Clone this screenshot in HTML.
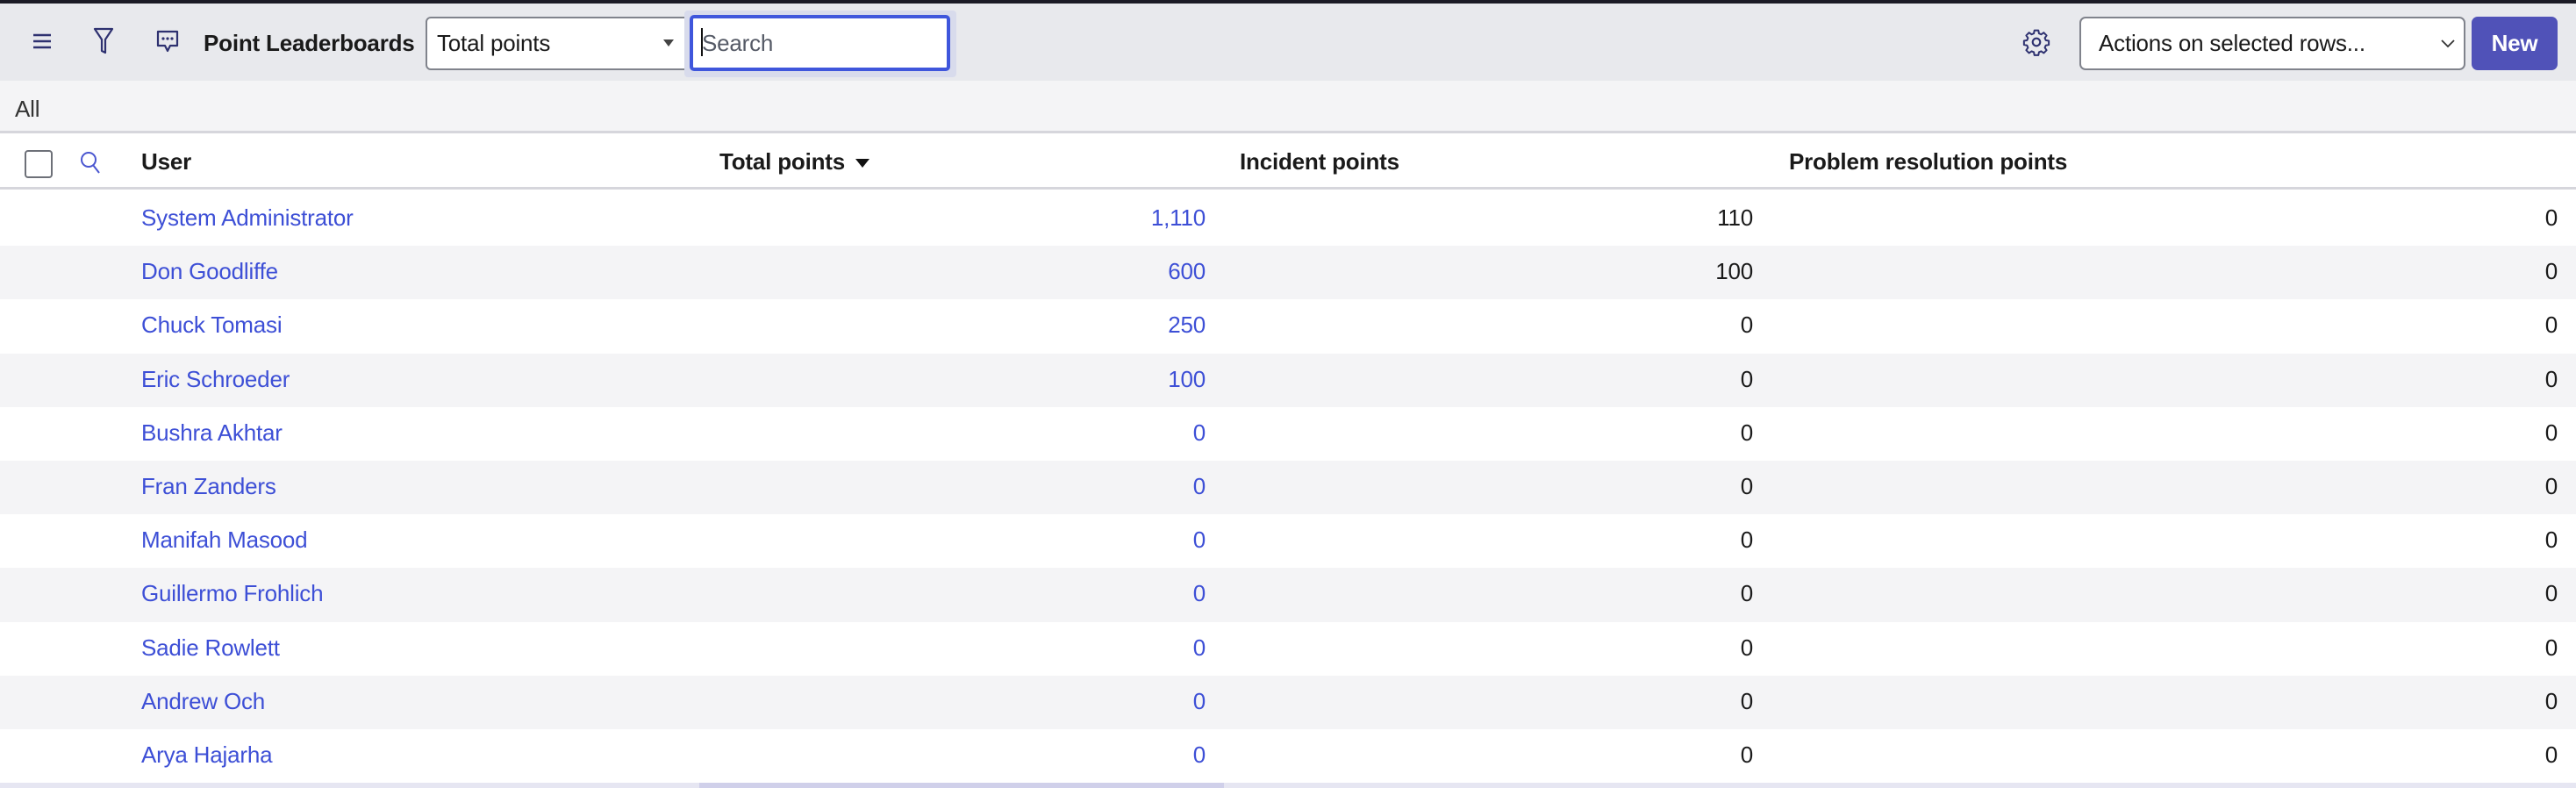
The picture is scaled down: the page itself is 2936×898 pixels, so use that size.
<!DOCTYPE html>
<html><head><style>
*{margin:0;padding:0;box-sizing:border-box}
body{width:2936px;height:898px;overflow:hidden;font-family:"Liberation Sans",sans-serif;background:#fff;position:relative;color:#1a1a1a}
.a{position:absolute}
.top{left:0;top:0;width:2936px;height:4px;background:#1b1b26}
.tb{left:0;top:4px;width:2936px;height:88px;background:#e8e9ed}
.fb{left:0;top:92px;width:2936px;height:60px;background:#f4f4f6;border-bottom:3px solid #d6d6dc}
.hd{left:0;top:152px;width:2936px;height:64px;background:#fff;border-bottom:3px solid #d6d6dc}
.row{left:0;width:2936px;height:61.5px}
.t{font-size:26px;line-height:32px;white-space:nowrap;letter-spacing:-0.2px}
.b{font-weight:bold}
.lk{color:#3d4fd6}
.r{text-align:right}
</style></head><body>
<div class="a top"></div>
<div class="a tb"></div>
<svg class="a" style="left:37px;top:38px" width="22" height="18"><path d="M1 2h20M1 9h20M1 16h20" stroke="#2e3170" stroke-width="2.5"/></svg>
<svg class="a" style="left:106px;top:30px" width="24" height="34"><path d="M2 3h20l-8 12v15l-4 -2v-13z" fill="none" stroke="#2e3170" stroke-width="2.2" stroke-linejoin="round"/></svg>
<svg class="a" style="left:178px;top:34px" width="26" height="28"><path d="M2 2h22v16h-8l-3 6-3-6h-8z" fill="none" stroke="#2e3170" stroke-width="2.2" stroke-linejoin="round"/><circle cx="8" cy="10" r="1.6" fill="#2e3170"/><circle cx="13" cy="10" r="1.6" fill="#2e3170"/><circle cx="18" cy="10" r="1.6" fill="#2e3170"/></svg>
<div class="a t b" style="left:232px;top:33px">Point Leaderboards</div>
<div class="a" style="left:485px;top:19px;width:300px;height:61px;background:#fff;border:2px solid #80838c;border-radius:6px 0 0 6px"></div>
<div class="a t" style="left:498px;top:33px">Total points</div>
<div class="a" style="left:756px;top:45px;width:0;height:0;border-left:6px solid transparent;border-right:6px solid transparent;border-top:8px solid #444"></div>
<div class="a" style="left:780px;top:12px;width:310px;height:76px;background:#d8dbec;border-radius:4px"></div>
<div class="a" style="left:786px;top:17px;width:297px;height:64px;background:#fff;border:4px solid #3f56dc;border-radius:5px"></div>
<div class="a" style="left:799px;top:32px;width:2px;height:32px;background:#111"></div>
<div class="a t" style="left:800px;top:33px;color:#555a66">Search</div>
<svg class="a" style="left:2305px;top:32px" width="32" height="32" viewBox="0 0 24 24"><circle cx="12" cy="12" r="3.2" fill="none" stroke="#2e3170" stroke-width="1.6"/><path d="M10.3 2h3.4l.5 2.6 1.9.8 2.2-1.5 2.4 2.4-1.5 2.2.8 1.9 2.6.5v3.4l-2.6.5-.8 1.9 1.5 2.2-2.4 2.4-2.2-1.5-1.9.8-.5 2.6h-3.4l-.5-2.6-1.9-.8-2.2 1.5-2.4-2.4 1.5-2.2-.8-1.9-2.6-.5v-3.4l2.6-.5.8-1.9-1.5-2.2 2.4-2.4 2.2 1.5 1.9-.8z" fill="none" stroke="#2e3170" stroke-width="1.5" stroke-linejoin="round"/></svg>
<div class="a" style="left:2370px;top:19px;width:440px;height:61px;background:#fff;border:2px solid #80838c;border-radius:7px"></div>
<div class="a t" style="left:2392px;top:33px">Actions on selected rows...</div>
<svg class="a" style="left:2782px;top:44px" width="16" height="12"><path d="M1 2l7 7 7-7" fill="none" stroke="#333" stroke-width="1.8"/></svg>
<div class="a" style="left:2817px;top:19px;width:98px;height:61px;background:#5052b8;border-radius:7px"></div>
<div class="a t b" style="left:2817px;top:33px;width:98px;text-align:center;color:#fff">New</div>

<div class="a fb"></div>
<div class="a t" style="left:17px;top:108px;color:#333">All</div>
<div class="a hd"></div>
<div class="a" style="left:28px;top:171px;width:32px;height:32px;border:2px solid #6d7078;border-radius:4px;background:#fff"></div>
<svg class="a" style="left:90px;top:171px" width="28" height="30"><circle cx="11" cy="11" r="8" fill="none" stroke="#4a56d0" stroke-width="2"/><path d="M16 17l7 9" stroke="#4a56d0" stroke-width="2"/></svg>
<div class="a t b" style="left:161px;top:168px">User</div>
<div class="a t b" style="left:820px;top:168px">Total points</div>
<div class="a" style="left:975px;top:181px;width:0;height:0;border-left:8px solid transparent;border-right:8px solid transparent;border-top:10px solid #111"></div>
<div class="a t b" style="left:1413px;top:168px">Incident points</div>
<div class="a t b" style="left:2039px;top:168px">Problem resolution points</div>

<div id="rows"></div>
<div class="a" style="left:0;top:892px;width:2936px;height:6px;background:#e6e6f2"></div>
<div class="a" style="left:797px;top:892px;width:598px;height:6px;background:#d0d0ea"></div>
<script>
var d=[["System Administrator","1,110","110"],["Don Goodliffe","600","100"],["Chuck Tomasi","250","0"],["Eric Schroeder","100","0"],["Bushra Akhtar","0","0"],["Fran Zanders","0","0"],["Manifah Masood","0","0"],["Guillermo Frohlich","0","0"],["Sadie Rowlett","0","0"],["Andrew Och","0","0"],["Arya Hajarha","0","0"]];
var h="";
d.forEach(function(r,i){var y=219+i*61.2;
h+='<div class="a row" style="top:'+y+'px;background:'+(i%2?'#f4f4f6':'#fff')+'"></div>';
h+='<div class="a t lk" style="left:161px;top:'+(y+13)+'px">'+r[0]+'</div>';
h+='<div class="a t lk r" style="left:1074px;width:300px;top:'+(y+13)+'px">'+r[1]+'</div>';
h+='<div class="a t r" style="left:1698px;width:300px;top:'+(y+13)+'px">'+r[2]+'</div>';
h+='<div class="a t r" style="left:2615px;width:300px;top:'+(y+13)+'px">0</div>';});
document.getElementById("rows").outerHTML=h;
</script>
</body></html>
